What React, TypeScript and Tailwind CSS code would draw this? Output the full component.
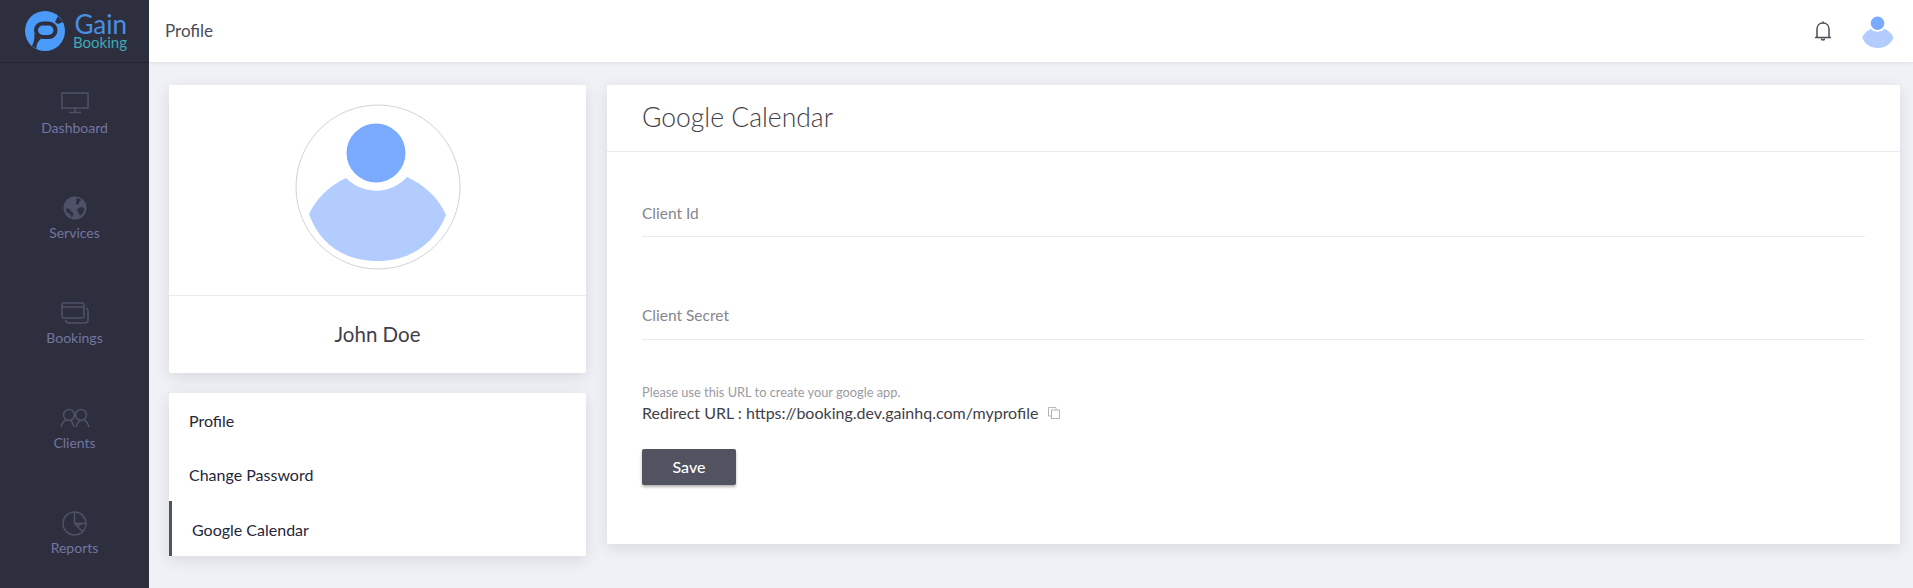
import type { FC, ReactNode } from "react";

const font = "font-['Lato','Open_Sans',sans-serif]";

const Logo: FC = () => (
    <svg width="42" height="42" viewBox="0 0 42 42" className="shrink-0">
        <circle cx="21" cy="21" r="20" fill="#4a9afa" />
        <rect x="12" y="13.500" width="19.500" height="13.500" rx="6.750" fill="none" stroke="#2d2f3f" strokeWidth="4" />
        <path d="M10 24 L17 29 C14 31 12 35 12.500 39 L8 36 C10 32 11 28 10 24 Z" fill="#2d2f3f" />
        <path d="M31 12 L34 6 L39 12 L34 14 Z" fill="#2d2f3f" />
    </svg>
);

const iconColor = "#4f5168";

const NavItem: FC<{ icon: ReactNode; label: string }> = ({ icon, label }) => (
    <div className="h-[105px] flex flex-col items-center pt-[27px]">
        <div className="h-[26px] flex items-center justify-center">{icon}</div>
        <span className="text-[14px] leading-[20px] mt-[2px] text-[#7275a0]">{label}</span>
    </div>
);

const Avatar: FC<{ size: number; ring?: boolean }> = ({ size, ring }) => (
    <svg width={size} height={size} viewBox="0 0 166 166">
        {ring && <circle cx="83" cy="83" r="82" fill="none" stroke="#d2d2d2" strokeWidth="1" />}
        <circle cx="81" cy="49" r="29.5" fill="#7aaafe" />
        <path d="M51 74 A 42 42 0 0 0 112 73 C 128 80 144 94 151 111 C 139 141 114 157 83 157 C 50 157 25 141 14 110 C 21 95 35 81 51 74 Z" fill="#b2cdfd" />
    </svg>
);

export default function App() {
    return (
        <div className={`h-screen flex overflow-hidden bg-[#f0f1f6] ${font}`}>
            {/* Sidebar */}
            <aside className="w-[149px] shrink-0 bg-[#2d2f3f]">
                <div className="h-[63px] border-b border-[#23242f] flex items-center pl-[24px] gap-[7px]">
                    <Logo />
                    <div className="flex flex-col items-end">
                        <span className="text-[26px] leading-[22px] text-[#4a90e2]">Gain</span>
                        <span className="text-[15px] leading-[14px] text-[#3fa9b5]">Booking</span>
                    </div>
                </div>
                <NavItem
                    label="Dashboard"
                    icon={
                        <svg width="28" height="22" viewBox="0 0 28 22" fill="none" stroke={iconColor} strokeWidth="1.5">
                            <rect x="1" y="1" width="26" height="15" />
                            <path d="M14 16v4M8 20.5h12" />
                        </svg>
                    }
                />
                <NavItem
                    label="Services"
                    icon={
                        <svg width="24" height="24" viewBox="0 0 24 24">
                            <circle cx="12" cy="12" r="11.5" fill={iconColor} />
                            <path d="M3 13c2-1 4 0 5 2s3 1 2 4-1 3-2 1-2-3-3-3-2-2-2-4zM13 3c2-1 5 0 5 1s-2 1-2 3-3 2-3 0 1-2 0-4zM15 12c2-1 5-1 6 0s-1 6-3 7-2-2-3-3-1-3 0-4z" fill="#2d2f3f" />
                        </svg>
                    }
                />
                <NavItem
                    label="Bookings"
                    icon={
                        <svg width="28" height="22" viewBox="0 0 28 22" fill="none" stroke={iconColor} strokeWidth="1.5">
                            <rect x="1" y="1" width="22" height="15" rx="2" />
                            <path d="M1 5h22" />
                            <path d="M25 6c1 .3 2 1 2 2.500V18c0 1.500-1 3-3 3H8c-2 0-3-1-3.500-3" />
                        </svg>
                    }
                />
                <NavItem
                    label="Clients"
                    icon={
                        <svg width="30" height="20" viewBox="0 0 30 20" fill="none" stroke={iconColor} strokeWidth="1.5">
                            <circle cx="9" cy="7" r="5.500" />
                            <circle cx="21" cy="7" r="5.500" />
                            <path d="M1 19c1-4 3-6 5-7M14 19c-1-4-2-6-4-7M16 19c1-4 3-6 5-7M29 19c-1-4-3-6-5-7" />
                        </svg>
                    }
                />
                <NavItem
                    label="Reports"
                    icon={
                        <svg width="25" height="25" viewBox="0 0 25 25" fill="none" stroke={iconColor} strokeWidth="1.5">
                            <circle cx="12.500" cy="12.500" r="11.500" />
                            <path d="M12.500 1v11.500h11M12.500 12.500l8 8M15 15l6-3" />
                        </svg>
                    }
                />
            </aside>

            <div className="flex-1 min-w-0 flex flex-col">
                {/* Topbar */}
                <header className="h-[62px] shrink-0 bg-white flex items-center justify-between pl-[16px] pr-[16px] shadow-[0_1px_4px_rgba(0,0,0,0.08)]">
                    <span className="text-[17px] text-[#4a4c59]">Profile</span>
                    <div className="flex items-center gap-[27px]">
                        <svg width="18" height="22" viewBox="0 0 18 22" fill="none" stroke="#4b4c57" strokeWidth="1.500">
                            <path d="M1 17.500h16M3 17.500V9c0-3.500 2.500-6 6-6s6 2.500 6 6v8.500" />
                            <path d="M9 3V1.500M7.500 18.500a1.500 1.500 0 0 0 3 0" />
                        </svg>
                        <Avatar size={38} />
                    </div>
                </header>

                {/* Content */}
                <main className="flex-1 flex items-start gap-[21px] pt-[23px] pl-[20px] pr-[13px]">
                    <div className="w-[417px] shrink-0 flex flex-col gap-[20px]">
                        <div className="bg-white rounded-[2px] shadow-[0_4px_16px_rgba(0,0,0,0.1)]">
                            <div className="h-[211px] pb-[6px] flex items-center justify-center border-b border-[#e9eaee]">
                                <Avatar size={166} ring />
                            </div>
                            <div className="h-[77px] flex items-center justify-center text-[20.5px] text-[#3f4049]">
                                John Doe
                            </div>
                        </div>

                        <div className="bg-white rounded-[2px] shadow-[0_4px_16px_rgba(0,0,0,0.1)] text-[16px] text-[#25263a]">
                            <div className="h-[54px] pt-[2px] flex items-center pl-[20px]">Profile</div>
                            <div className="h-[54px] pt-[2px] flex items-center pl-[20px]">Change Password</div>
                            <div className="h-[55px] pt-[2px] flex items-center pl-[20px] border-l-[3px] border-[#525361]">Google Calendar</div>
                        </div>
                    </div>

                    <div className="flex-1 min-w-0 h-[459px] bg-white rounded-[2px] shadow-[0_4px_16px_rgba(0,0,0,0.1)]">
                        <div className="h-[67px] flex items-center pl-[35px] border-b border-[#e9eaee] text-[26.500px] font-light text-[#3f4049]">
                            Google Calendar
                        </div>
                        <div className="pl-[35px] pr-[35px]">
                            <div className="mt-[42px] h-[43px] pt-[6px] border-b border-[#e9eaee] text-[15.500px] leading-[26px] text-[#85868f]">Client Id</div>
                            <div className="mt-[59px] h-[44px] pt-[6px] border-b border-[#e9eaee] text-[15.500px] leading-[26px] text-[#85868f]">Client Secret</div>
                            <p className="mt-[43px] text-[12.800px] leading-[18px] text-[#9a9ba3]">Please use this URL to create your google app.</p>
                            <div className="mt-[1px] mb-[1px] flex items-center text-[16px] leading-[22px] text-[#3f4049]">
                                Redirect URL : https://booking.dev.gainhq.com/myprofile
                                <svg width="12" height="12" viewBox="0 0 12 12" fill="none" stroke="#b5b6bc" className="ml-[10px]">
                                    <path d="M8 2.500V.5H.5V9H3" />
                                    <rect x="3.500" y="3" width="8" height="8.500" />
                                </svg>
                            </div>
                            <button className="mt-[24px] w-[94px] h-[36px] bg-[#525361] text-white text-[16px] font-medium rounded-[2px] shadow-[0_2px_3px_rgba(0,0,0,0.3)]">
                                Save
                            </button>
                        </div>
                    </div>
                </main>
            </div>
        </div>
    );
}
